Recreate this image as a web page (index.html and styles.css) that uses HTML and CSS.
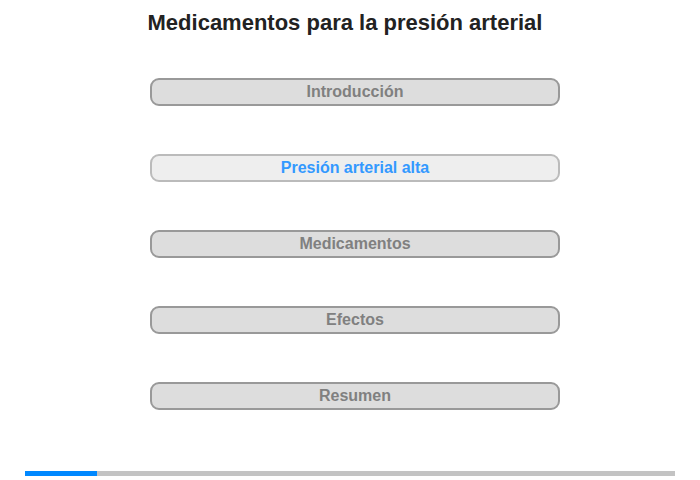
FILE: index.html
```html
<!DOCTYPE html>
<html lang="es">
<head>
    <meta charset="UTF-8">
    <meta name="viewport" content="width=device-width, initial-scale=1.0">
    <title>Medicamentos para la presión arterial</title>
    <link rel="stylesheet" href="styles.css">
</head>
<body>
    <div class="page">
        <h1>Medicamentos para la presión arterial</h1>
        <div class="menu">
            <div class="step">Introducción</div>
            <div class="step active">Presión arterial alta</div>
            <div class="step">Medicamentos</div>
            <div class="step">Efectos</div>
            <div class="step">Resumen</div>
        </div>
        <div class="progress">
            <div class="progress-fill" style="width: 11%;"></div>
        </div>
    </div>
</body>
</html>
```

FILE: styles.css
```css
* {
    margin: 0;
    padding: 0;
    box-sizing: border-box;
    font-family: 'Liberation Sans', Arial, sans-serif;
}

body {
    background: #fff;
    color: #222;
    width: 700px;
    height: 480px;
    overflow: hidden;
}

.page {
    display: flex;
    flex-direction: column;
    height: 480px;
}

h1 {
    width: 690px;
    margin-top: 11px;
    text-align: center;
    font-size: 22px;
    line-height: 23px;
    font-weight: bold;
    color: #222;
}

.menu {
    display: flex;
    flex-direction: column;
    gap: 48px;
    width: 410px;
    margin: 44px 0 0 150px;
}

.step {
    height: 28px;
    border: 2px solid #999;
    border-radius: 9px;
    background: #ddd;
    color: #808080;
    font-size: 16px;
    font-weight: bold;
    line-height: 24px;
    text-align: center;
}

.step.active {
    background: #eee;
    border-color: #bbb;
    color: #3399ff;
}

.progress {
    width: 650px;
    height: 5px;
    margin: 61px 0 0 25px;
    background: #c3c3c3;
}

.progress-fill {
    height: 100%;
    background: #0088ff;
}
```
